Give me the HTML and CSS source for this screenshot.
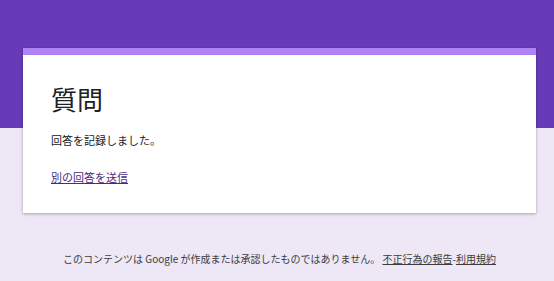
FILE: index.html
```html
<!DOCTYPE html>
<html lang="ja">
<head>
  <meta charset="UTF-8">
  <title>質問</title>
  <link rel="stylesheet" href="styles.css">
</head>
<body>
  <div class="band"></div>
  <div class="container">
    <div class="card">
      <h1 class="title">質問</h1>
      <p class="message">回答を記録しました。</p>
      <a class="again" href="#">別の回答を送信</a>
    </div>
    <div class="footer">
      このコンテンツは Google が作成または承認したものではありません。
      <a href="#">不正行為の報告</a>-<a href="#">利用規約</a>
    </div>
  </div>
</body>
</html>
```

FILE: styles.css
```css
body {
  margin: 0;
  background: #ede7f6;
  font-family: "Noto Sans CJK JP", "Liberation Sans", sans-serif;
  color: #202124;
}
.band {
  height: 128px;
  background: #673ab7;
}
.container {
  width: 513px;
  margin: -80px 0 0 23px;
}
.card {
  background: #fff;
  border-top: 7px solid #b083f4;
  box-shadow: 0 1px 3px rgba(0, 0, 0, 0.3);
  padding: 26px 28px 0;
  height: 132px;
}
.title {
  font-size: 26px;
  font-weight: normal;
  line-height: 36px;
  margin: 0 0 15px;
}
.message {
  font-size: 11px;
  line-height: 16px;
  margin: 0 0 15px;
}
.again {
  font-size: 11px;
  line-height: 16px;
  color: #4a2b84;
}
.footer {
  margin-top: 38px;
  text-align: center;
  font-size: 10px;
  color: #3c3c3c;
}
.footer a {
  color: #3c3c3c;
}
```
